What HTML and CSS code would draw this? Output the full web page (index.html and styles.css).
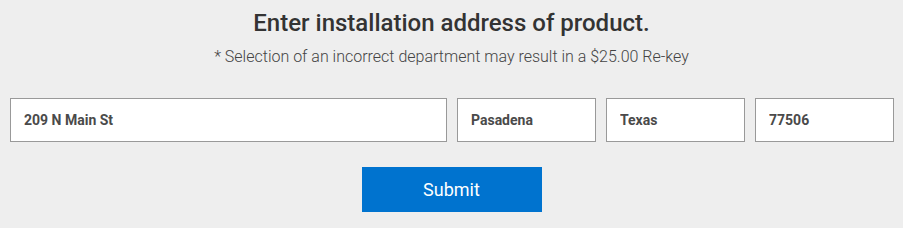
FILE: index.html
```html
<html>

<head>
    <title>Installation Address</title>
    <link rel="stylesheet" href="styles.css">
</head>

<body>
    <div id="content">
        <div class="section header">
            <h1>Enter installation address of product.</h1>
            <p>* Selection of an incorrect department may result in a $25.00 Re-key</p>
        </div>
        <div class="section form">
            <div class="fields">
                <input class="street" value="209 N Main St">
                <input class="city" value="Pasadena">
                <input class="state" value="Texas">
                <input class="zip" value="77506">
            </div>
            <button class="submit">Submit</button>
        </div>
    </div>
</body>

</html>
```

FILE: styles.css
```css
body {
    margin: 0;
    background: #eeeeee;
    font-family: Roboto, "Liberation Sans", sans-serif;
}

#content {
    display: flex;
    flex-direction: column;
    align-items: center;
    padding-top: 9px;
}

.section {
    width: 100%;
    display: flex;
    flex-direction: column;
    align-items: center;
}

.header h1 {
    margin: 0;
    font-size: 24px;
    line-height: 28px;
    font-weight: 500;
    color: #333333;
}

.header p {
    margin: 10px 0 0;
    font-size: 16px;
    line-height: 20px;
    font-weight: 300;
    color: #444444;
}

.form {
    margin-top: 31px;
    gap: 25px;
}

.fields {
    display: grid;
    grid-template-columns: 437px 139px 139px 139px;
    gap: 10px;
    align-self: flex-start;
    margin-left: 10px;
}

.fields input {
    box-sizing: border-box;
    height: 44px;
    margin: 0;
    padding: 0 13px;
    border: 1px solid #999999;
    background: #ffffff;
    font-family: inherit;
    font-size: 14px;
    font-weight: 700;
    color: #4a4a4a;
    outline: none;
}

.submit {
    width: 180px;
    height: 45px;
    border: none;
    background: #0073cf;
    color: #ffffff;
    font-family: inherit;
    font-size: 18px;
    font-weight: 400;
}
```
